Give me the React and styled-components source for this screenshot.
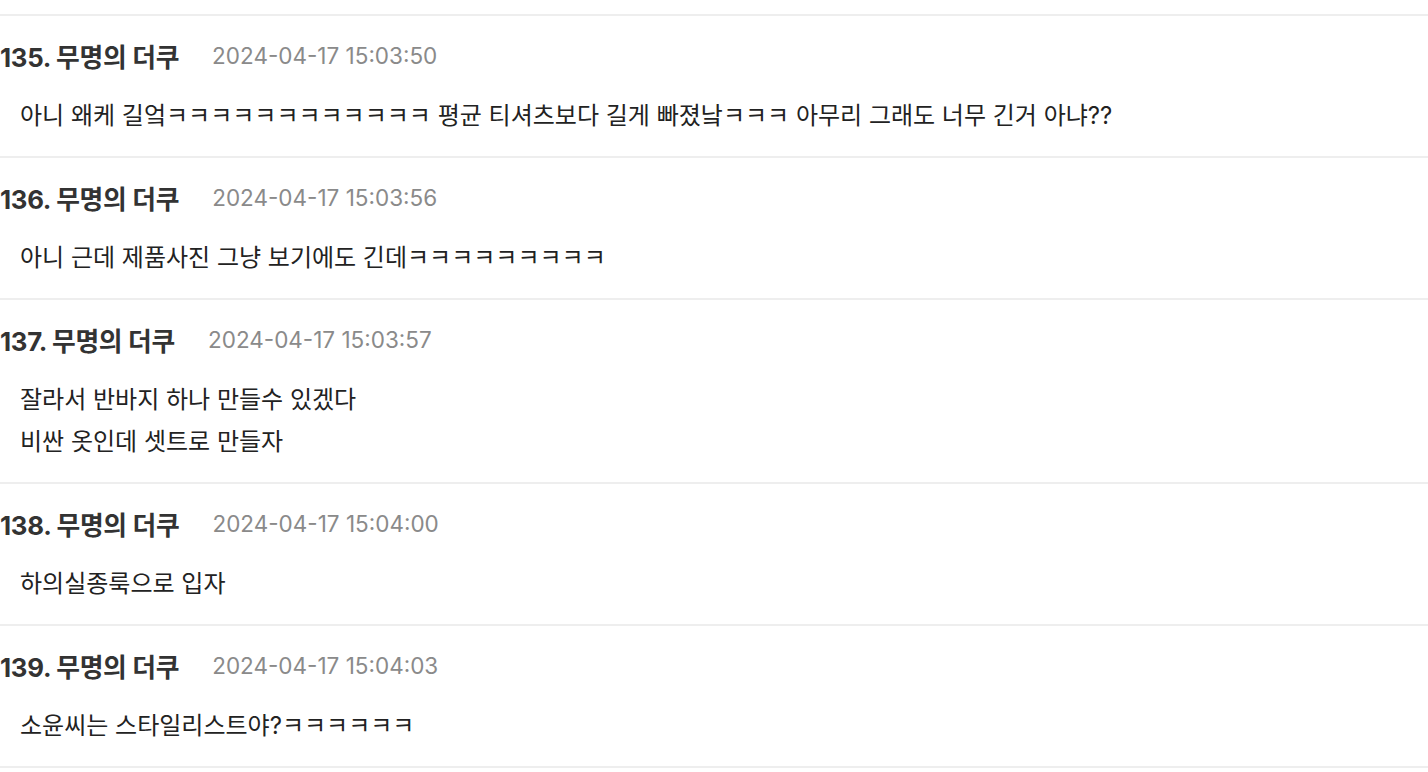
import styled, { createGlobalStyle } from 'styled-components'

const GlobalStyle = createGlobalStyle`
  html, body {
    margin: 0;
    padding: 0;
    background: #fff;
  }
  body {
    font-family: "Inter", "Noto Sans CJK KR", sans-serif;
    color: #333;
  }
`

const List = styled.div`
  padding-top: 14px;
  width: 1428px;
`

const Item = styled.div`
  border-top: 2px solid #eeeeee;
  padding: 24px 0 19px;
  &:last-child {
    border-bottom: 2px solid #eeeeee;
  }
`

const Header = styled.div`
  display: flex;
  align-items: center;
  height: 30px;
  gap: 33px;
`

const Name = styled.span`
  font-size: 25.8px;
  font-weight: 700;
  color: #333;
  letter-spacing: -0.3px;
`

const Time = styled.span`
  font-size: 22.5px;
  color: #8a8a8a;
`

const Body = styled.div`
  margin-top: 25px;
  padding-left: 20px;
  font-size: 24px;
  line-height: 42px;
  color: #222;
  white-space: pre-line;
`

const comments = [
  { no: 135, time: '2024-04-17 15:03:50', text: '아니 왜케 길엌ㅋㅋㅋㅋㅋㅋㅋㅋㅋㅋㅋㅋ 평균 티셔츠보다 길게 빠졌낰ㅋㅋㅋ 아무리 그래도 너무 긴거 아냐??' },
  { no: 136, time: '2024-04-17 15:03:56', text: '아니 근데 제품사진 그냥 보기에도 긴데ㅋㅋㅋㅋㅋㅋㅋㅋㅋ' },
  { no: 137, time: '2024-04-17 15:03:57', text: '잘라서 반바지 하나 만들수 있겠다\n비싼 옷인데 셋트로 만들자' },
  { no: 138, time: '2024-04-17 15:04:00', text: '하의실종룩으로 입자' },
  { no: 139, time: '2024-04-17 15:04:03', text: '소윤씨는 스타일리스트야?ㅋㅋㅋㅋㅋㅋ' },
]

export default function App() {
  return (
    <>
      <GlobalStyle />
      <List>
        {comments.map((c) => (
          <Item key={c.no}>
            <Header>
              <Name>{c.no}. 무명의 더쿠</Name>
              <Time>{c.time}</Time>
            </Header>
            <Body>{c.text}</Body>
          </Item>
        ))}
      </List>
    </>
  )
}
